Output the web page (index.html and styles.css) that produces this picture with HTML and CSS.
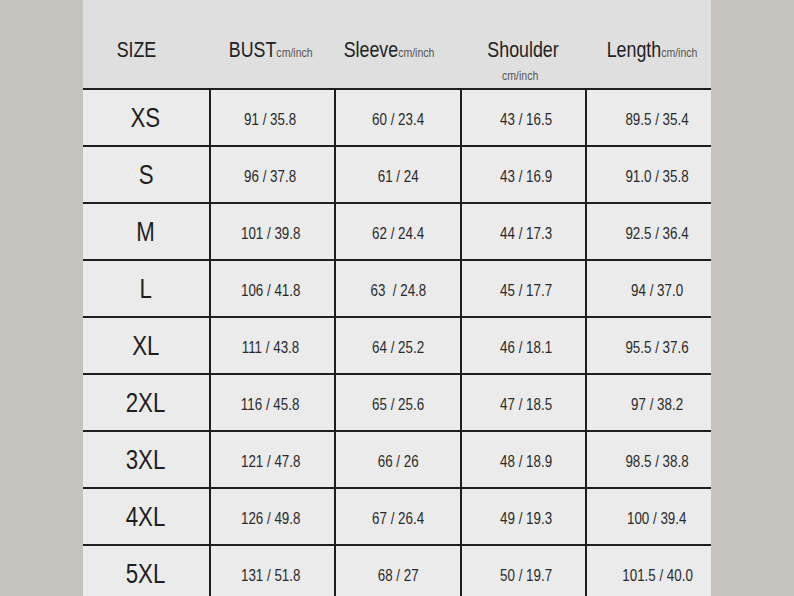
FILE: index.html
```html
<!DOCTYPE html>
<html>
<head>
<meta charset="utf-8">
<link rel="stylesheet" href="styles.css">
</head>
<body>
<div class="page">
  <div class="chart">
    <div class="head">
      <div class="hcell h-size"><span class="nar">SIZE</span></div>
      <div class="hcell"><span class="nar">BUST<span class="unit">cm/inch</span></span></div>
      <div class="hcell h-sleeve"><span class="nar">Sleeve<span class="unit">cm/inch</span></span></div>
      <div class="hcell"><span class="nar">Shoulder<span class="unit unit-block">cm/inch</span></span></div>
      <div class="hcell h-length"><span class="nar">Length<span class="unit">cm/inch</span></span></div>
    </div>
    <div class="row"><div class="cell size"><span class="nar">XS</span></div><div class="cell c2"><span class="nar">91 / 35.8</span></div><div class="cell c3"><span class="nar">60 / 23.4</span></div><div class="cell c4"><span class="nar">43 / 16.5</span></div><div class="cell c5"><span class="nar">89.5 / 35.4</span></div></div>
    <div class="row"><div class="cell size"><span class="nar">S</span></div><div class="cell c2"><span class="nar">96 / 37.8</span></div><div class="cell c3"><span class="nar">61 / 24</span></div><div class="cell c4"><span class="nar">43 / 16.9</span></div><div class="cell c5"><span class="nar">91.0 / 35.8</span></div></div>
    <div class="row"><div class="cell size"><span class="nar">M</span></div><div class="cell c2"><span class="nar">101 / 39.8</span></div><div class="cell c3"><span class="nar">62 / 24.4</span></div><div class="cell c4"><span class="nar">44 / 17.3</span></div><div class="cell c5"><span class="nar">92.5 / 36.4</span></div></div>
    <div class="row"><div class="cell size"><span class="nar">L</span></div><div class="cell c2"><span class="nar">106 / 41.8</span></div><div class="cell c3"><span class="nar">63&nbsp; / 24.8</span></div><div class="cell c4"><span class="nar">45 / 17.7</span></div><div class="cell c5"><span class="nar">94 / 37.0</span></div></div>
    <div class="row"><div class="cell size"><span class="nar">XL</span></div><div class="cell c2"><span class="nar">111 / 43.8</span></div><div class="cell c3"><span class="nar">64 / 25.2</span></div><div class="cell c4"><span class="nar">46 / 18.1</span></div><div class="cell c5"><span class="nar">95.5 / 37.6</span></div></div>
    <div class="row"><div class="cell size"><span class="nar">2XL</span></div><div class="cell c2"><span class="nar">116 / 45.8</span></div><div class="cell c3"><span class="nar">65 / 25.6</span></div><div class="cell c4"><span class="nar">47 / 18.5</span></div><div class="cell c5"><span class="nar">97 / 38.2</span></div></div>
    <div class="row"><div class="cell size"><span class="nar">3XL</span></div><div class="cell c2"><span class="nar">121 / 47.8</span></div><div class="cell c3"><span class="nar">66 / 26</span></div><div class="cell c4"><span class="nar">48 / 18.9</span></div><div class="cell c5"><span class="nar">98.5 / 38.8</span></div></div>
    <div class="row"><div class="cell size"><span class="nar">4XL</span></div><div class="cell c2"><span class="nar">126 / 49.8</span></div><div class="cell c3"><span class="nar">67 / 26.4</span></div><div class="cell c4"><span class="nar">49 / 19.3</span></div><div class="cell c5"><span class="nar">100 / 39.4</span></div></div>
    <div class="row"><div class="cell size"><span class="nar">5XL</span></div><div class="cell c2"><span class="nar">131 / 51.8</span></div><div class="cell c3"><span class="nar">68 / 27</span></div><div class="cell c4"><span class="nar">50 / 19.7</span></div><div class="cell c5"><span class="nar">101.5 / 40.0</span></div></div>
  </div>
</div>
</body>
</html>
```

FILE: styles.css
```css
html, body {
  margin: 0;
  padding: 0;
  background: #c6c2be;
  height: 596px;
  overflow: hidden;
}

.page {
  display: flex;
  padding-left: 83px;
  font-family: "Liberation Sans", Arial, sans-serif;
  color: #252525;
}

.chart {
  width: 628px;
  background: #ebebeb;
}

.nar {
  display: inline-block;
  transform: scaleX(0.81);
  transform-origin: center;
}

.head {
  display: grid;
  grid-template-columns: repeat(5, 1fr);
  height: 88px;
  background: #dfdfdf;
  border-bottom: 2px solid #1e1e1e;
}

.hcell {
  padding-top: 37px;
  text-align: center;
  font-size: 22px;
  line-height: 26px;
  color: #222;
  white-space: nowrap;
}

.h-size { padding-right: 18px; }
.h-sleeve { padding-right: 16px; }
.h-length { padding-left: 7px; }

.unit {
  font-size: 13px;
  color: #555;
}

.unit-block {
  display: block;
  line-height: 16px;
  margin-top: 5px;
  padding-right: 7px;
}

.row {
  display: grid;
  grid-template-columns: repeat(5, 1fr);
  height: 55px;
  border-bottom: 2px solid #1e1e1e;
}

.cell {
  display: flex;
  align-items: center;
  justify-content: center;
  padding-top: 4px;
  font-size: 16.5px;
  color: #2a2a2a;
  border-left: 2px solid #1e1e1e;
  white-space: nowrap;
}

.cell.size {
  border-left: none;
  padding-top: 1px;
  font-size: 27.5px;
  color: #1e1e1e;
}

.c2 { padding-right: 4px; }
.c4 { padding-left: 6px; }
.c5 { padding-left: 16px; }
```
